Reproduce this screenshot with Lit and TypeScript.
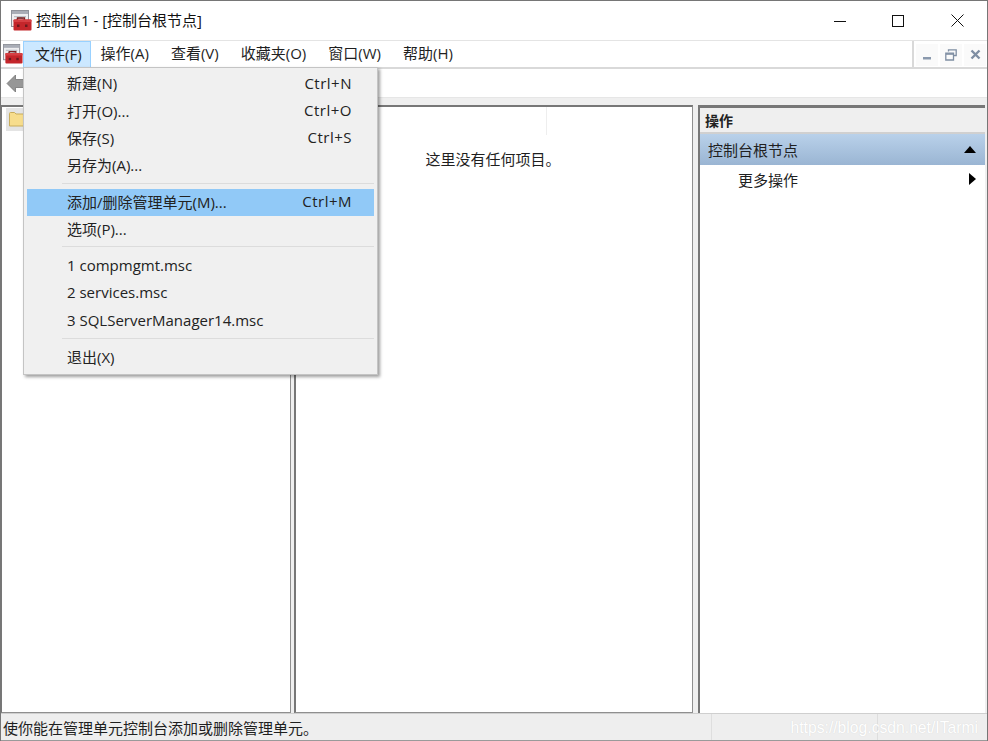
import { LitElement, html, css, svg } from "lit";
import { customElement } from "lit/decorators.js";

const snapIcon = svg`
  <rect x="0.5" y="0.5" width="17" height="16" fill="#eeeef0" stroke="#8f929a"/>
  <rect x="1" y="1" width="16" height="3" fill="#a9adb6"/>
  <rect x="3" y="6" width="12" height="1.3" fill="#bcbfc5"/>
  <path d="M4.5 12a4.5 4 0 0 1 9 0" fill="none" stroke="#94979e" stroke-width="1.3"/>
  <path d="M6.5 10v-2h7v2" fill="none" stroke="#7a2020" stroke-width="1.3"/>
  <rect x="2.5" y="9.5" width="18" height="11" rx="1" fill="#c4262b"/>
  <rect x="2.5" y="9.5" width="18" height="2.5" rx="1" fill="#d63f43"/>
  <rect x="6" y="14.5" width="2.5" height="2.5" fill="#6a1a1e"/>
  <rect x="14" y="14.5" width="2.5" height="2.5" fill="#6a1a1e"/>
`;

interface Row { kind?: "sep"; label?: string; key?: string; active?: boolean; }
const rows: Row[] = [
  { label: "新建(N)", key: "Ctrl+N" },
  { label: "打开(O)...", key: "Ctrl+O" },
  { label: "保存(S)", key: "Ctrl+S" },
  { label: "另存为(A)..." },
  { kind: "sep" },
  { label: "添加/删除管理单元(M)...", key: "Ctrl+M", active: true },
  { label: "选项(P)..." },
  { kind: "sep" },
  { label: "1 compmgmt.msc" },
  { label: "2 services.msc" },
  { label: "3 SQLServerManager14.msc" },
  { kind: "sep" },
  { label: "退出(X)" },
];
const menus = ["操作(A)", "查看(V)", "收藏夹(O)", "窗口(W)", "帮助(H)"];

@customElement("app-root")
export class AppRoot extends LitElement {
  static styles = css`
    :host {
      display: block;
      width: 988px;
      height: 741px;
      font-family: "Open Sans", "Noto Sans CJK SC", sans-serif;
      font-size: 15px;
      color: #1f1f1f;
    }
    * { box-sizing: border-box; }
    .win {
      position: relative;
      width: 988px;
      height: 741px;
      display: flex;
      flex-direction: column;
      background: #fff;
      border: 1px solid #767676;
      border-bottom: none;
      overflow: hidden;
    }
    .title {
      height: 39px;
      display: flex;
      align-items: center;
      flex: none;
      background: #fff;
      padding-left: 10px;
    }
    .title svg.app { width: 21px; height: 22px; margin-right: 4px; margin-top: 1px; }
    .title .t { flex: 1; color: #111; padding-bottom: 2px; }
    .cap { width: 59px; height: 39px; display: flex; align-items: center; justify-content: center; }
    .cap.mx { width: 58px; }
    .cap.cl { width: 60px; }
    .menubar {
      height: 29px;
      flex: none;
      display: flex;
      align-items: stretch;
      border-top: 1px solid #e4e4e4;
      border-bottom: 2px solid #d9d9d9;
      background: #fff;
    }
    .menubar .logo { width: 22px; padding: 3px 0 0 2px; }
    .menubar .logo svg { width: 20px; height: 21px; display: block; }
    .mi { padding: 0 11px 3px 11px; display: flex; align-items: center; white-space: nowrap; }
    .mi.open { background: #cce8ff; border: 1px solid #99d1ff; border-bottom: none; padding: 0 8px 3px 11px; margin-right: -1px; }
    .spacer { flex: 1; border-right: 2px solid #d9d9d9; }
    .mdi { display: flex; align-items: center; gap: 2px; padding: 1px 1px 0 2px; }
    .mdi span { width: 22px; height: 22px; display: flex; align-items: center; justify-content: center; background: #fafafa; }
    .toolbar { height: 29px; flex: none; display: flex; align-items: center; padding-left: 5px; background: #fff; border-bottom: 1px solid #e6e6e6; }
    .panes {
      flex: 1;
      min-height: 0;
      display: flex;
      gap: 4px;
      background: #efefef;
      padding: 7px 2px 0 0;
    }
    .pane {
      background: #fff;
      border: 1px solid #8f8f8f;
      border-left: 2px solid #777;
      border-top: 2px solid #777;
    }
    .p1 { width: 290px; padding: 1px 0 0 4px; border-left: 1px solid #777; }
    .sel { width: 30px; height: 23px; background: #e4e4e4; padding: 3px 0 0 3px; }
    .sel svg { display: block; }
    .p2 { width: 399px; margin-left: -1px; display: flex; flex-direction: column; }
    .colhead { height: 28px; border-right: 1px solid #eeeeee; width: 251px; }
    .empty { text-align: center; margin-top: 13px; padding-right: 2px; }
    .p3 { flex: 1; margin-left: 1px; display: flex; flex-direction: column; border-top: 3px solid #777; border-right: none; border-bottom: none; border-left: 2px solid #777; }
    .ahead { height: 26px; flex: none; background: #efefef; border-bottom: 2px solid #d0d0d0; padding-left: 5px; font-weight: 700; font-size: 14px; display: flex; align-items: center; color: #222; }
    .asec { height: 31px; flex: none; display: flex; align-items: center; justify-content: space-between; padding: 0 9px 0 8px; background: linear-gradient(#b9d1ea, #9ab5d3); }
    .aitem { height: 30px; flex: none; display: flex; align-items: center; justify-content: space-between; padding: 0 9px 2px 38px; }
    .status {
      height: 28px;
      flex: none;
      display: flex;
      align-items: center;
      background: #eeeeee;
      border-top: 1px solid #cfcfcf;
      border-bottom: 1px solid #9a9a9a;
      position: relative;
    }
    .status .msg { width: 711px; padding-left: 2px; align-self: stretch; display: flex; align-items: center; border-right: 1px solid #dedede; }
    .status .mid { width: 166px; align-self: stretch; border-right: 1px solid #dedede; }
    .mark {
      position: absolute;
      right: 9px;
      top: 0;
      font-family: "Liberation Sans", sans-serif;
      font-size: 15.7px;
      line-height: 27px;
      color: #fff;
      text-shadow: 0 0 1px #d0d0d0;
    }
    .menu {
      position: absolute;
      left: 22px;
      top: 66px;
      width: 355px;
      height: 308px;
      background: #f0f0f0;
      border: 1px solid #c4c4c4;
      box-shadow: 2px 2px 3px rgba(0, 0, 0, 0.38);
      padding: 2px 3px 0 3px;
    }
    .row { height: 27.4px; display: flex; align-items: center; justify-content: space-between; padding: 0 22px 2px 40px; color: #222; white-space: nowrap; }
    .row .key { letter-spacing: 0.5px; }
    .row.active { background: #91c9f7; }
    .sep { height: 1px; background: #dcdcdc; margin: 3px 0 5px 35px; }
  `;

  render() {
    return html`
      <div class="win">
        <div class="title">
          <svg class="app" viewBox="0 0 21 22">${snapIcon}</svg>
          <div class="t">控制台1 - [控制台根节点]</div>
          <div class="cap"><svg width="12" height="12" viewBox="0 0 12 12"><path d="M0 6.5h12" stroke="#111" fill="none"/></svg></div>
          <div class="cap mx"><svg width="12" height="12" viewBox="0 0 12 12"><rect x="0.5" y="0.5" width="11" height="11" fill="none" stroke="#111"/></svg></div>
          <div class="cap cl"><svg width="13" height="13" viewBox="0 0 13 13"><path d="M0.5 0.5l12 12M12.5 0.5l-12 12" stroke="#111" fill="none"/></svg></div>
        </div>
        <div class="menubar">
          <div class="logo"><svg viewBox="0 0 21 22">${snapIcon}</svg></div>
          <div class="mi open">文件(F)</div>
          ${menus.map((m) => html`<div class="mi">${m}</div>`)}
          <div class="spacer"></div>
          <div class="mdi">
            <span><svg width="10" height="10" viewBox="0 0 10 10"><rect x="1" y="7" width="8" height="2.5" fill="#8a99ad"/></svg></span>
            <span><svg width="12" height="12" viewBox="0 0 12 12"><path d="M3.5 2.5V0.8h7.7v5.7H9M0.8 4.2h7.7v6.8H0.8z" fill="none" stroke="#7f8ea3" stroke-width="1.3"/><path d="M1 5h7" stroke="#7f8ea3" stroke-width="1.6"/></svg></span>
            <span><svg width="11" height="11" viewBox="0 0 11 11"><path d="M1.5 1.5l8 8M9.5 1.5l-8 8" stroke="#7f8ea3" stroke-width="2.4" fill="none"/></svg></span>
          </div>
        </div>
        <div class="toolbar">
          <svg width="18" height="19" viewBox="0 0 18 19"><path d="M9.5 1L1 9.5 9.5 18v-4.5H18v-8H9.5z" fill="#979797" stroke="#737373" stroke-width="0.8"/></svg>
        </div>
        <div class="panes">
          <div class="pane p1">
            <div class="sel">
              <svg width="18" height="16" viewBox="0 0 18 16"><path d="M0.5 2.5a1 1 0 0 1 1-1h4l1.5 1.5h9.5v12H0.5z" fill="#f7dd8d" stroke="#c9ad5b"/></svg>
            </div>
          </div>
          <div class="pane p2">
            <div class="colhead"></div>
            <div class="empty">这里没有任何项目。</div>
          </div>
          <div class="pane p3">
            <div class="ahead">操作</div>
            <div class="asec"><span>控制台根节点</span><svg width="12" height="7" viewBox="0 0 12 7"><path d="M6 0l6 7H0z" fill="#000"/></svg></div>
            <div class="aitem"><span>更多操作</span><svg width="7" height="12" viewBox="0 0 7 12"><path d="M0 0l7 6-7 6z" fill="#000"/></svg></div>
          </div>
        </div>
        <div class="status">
          <div class="msg">使你能在管理单元控制台添加或删除管理单元。</div>
          <div class="mid"></div>
          <div class="mark">https://blog.csdn.net/ITarmi</div>
        </div>
        <div class="menu">
          ${rows.map((r) =>
            r.kind === "sep"
              ? html`<div class="sep"></div>`
              : html`<div class="row ${r.active ? "active" : ""}"><span>${r.label}</span><span class="key">${r.key ?? ""}</span></div>`
          )}
        </div>
      </div>
    `;
  }
}
